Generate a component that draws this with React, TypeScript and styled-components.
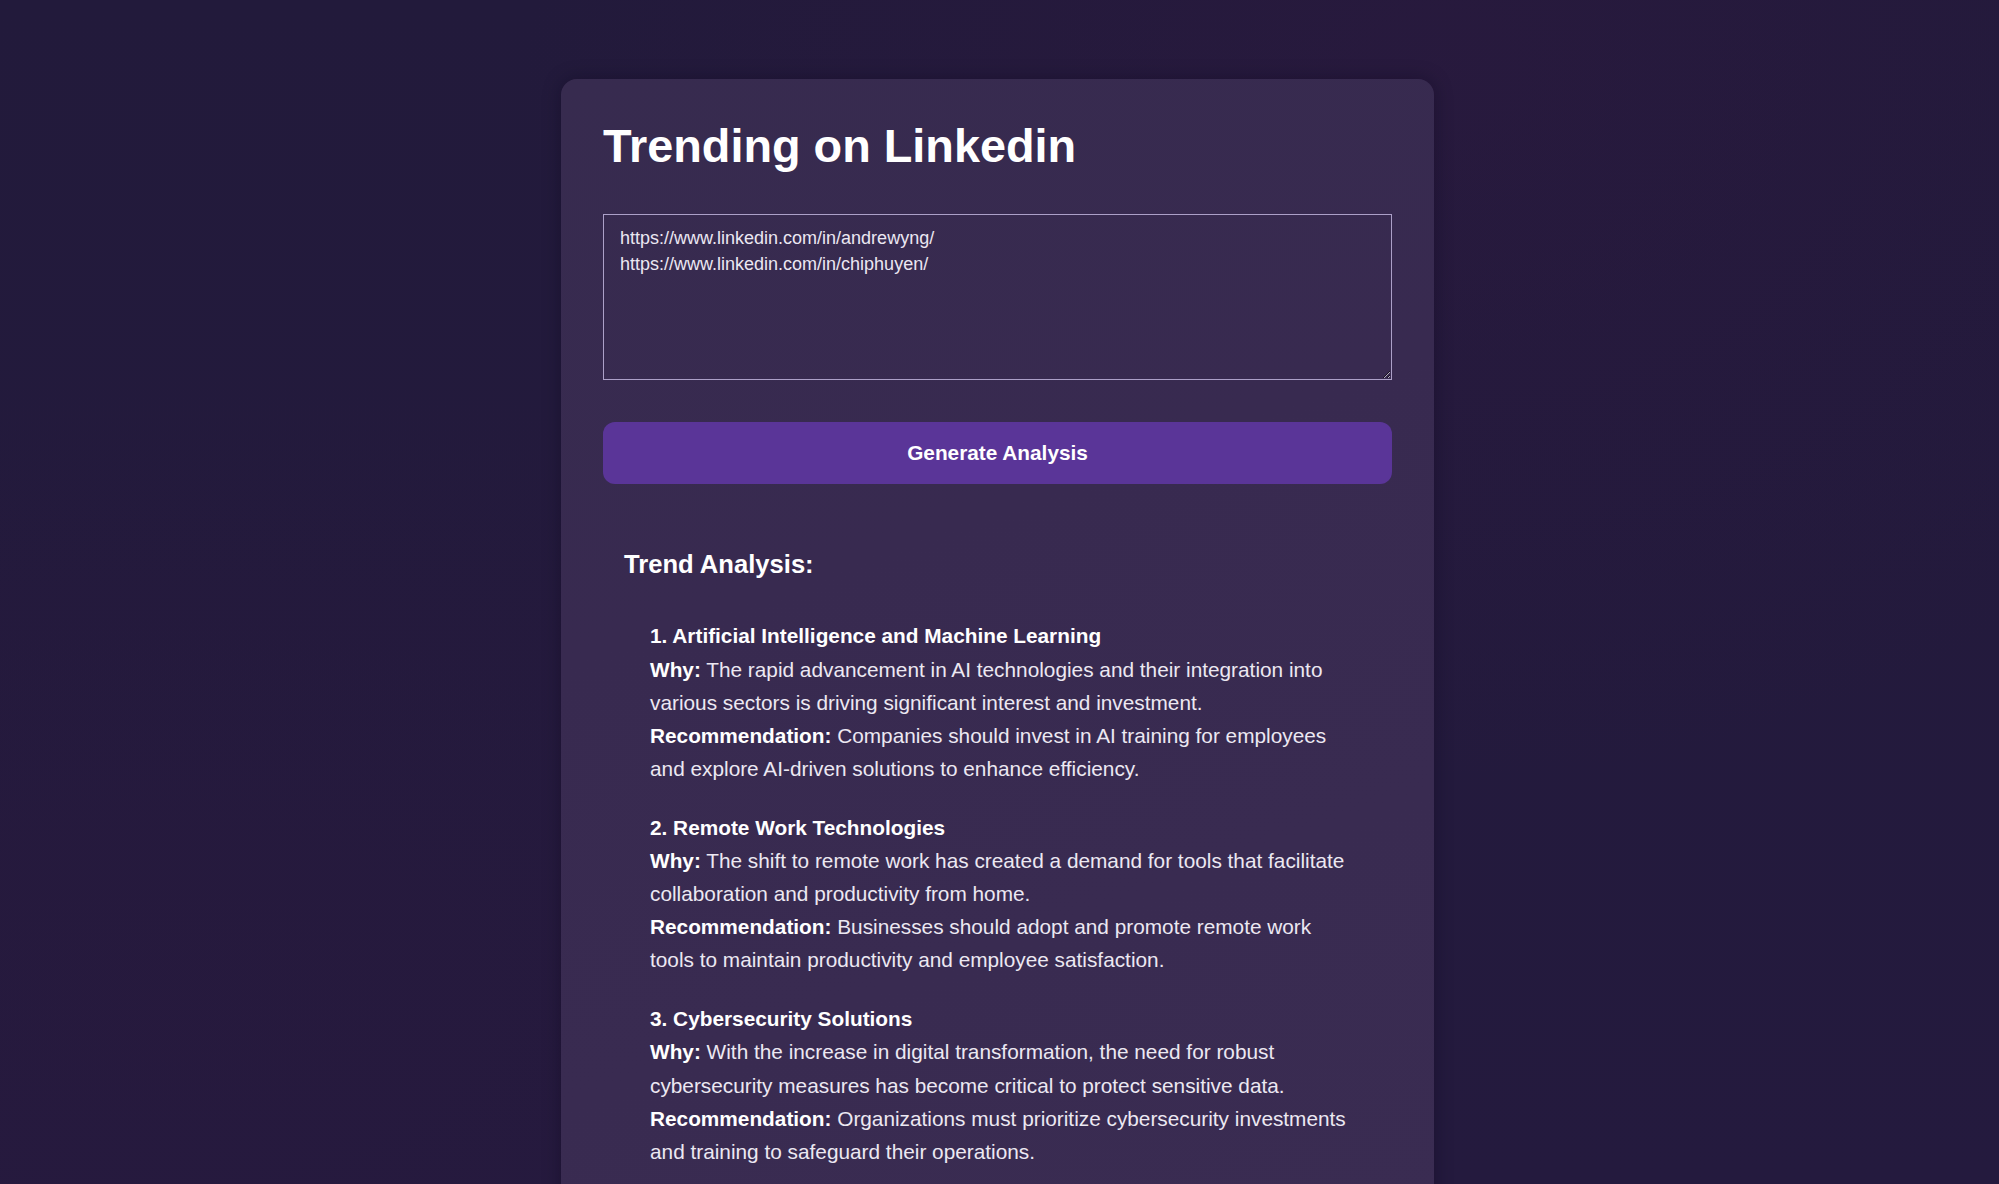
import React from "react";
import styled, { createGlobalStyle } from "styled-components";

const GlobalStyle = createGlobalStyle`
  html, body {
    margin: 0;
    padding: 0;
    background: #231a3d;
    font-family: "Liberation Sans", Arial, sans-serif;
    color: #f4f1f8;
  }
  #root {
    min-height: 100vh;
  }
`;

const Page = styled.div`
  height: 1184px;
  overflow: hidden;
  background:
    radial-gradient(ellipse at 72% 6%, rgba(52, 24, 66, 0.3), transparent 45%),
    radial-gradient(ellipse at 8% 85%, rgba(46, 24, 62, 0.25), transparent 45%),
    linear-gradient(180deg, #221a3b 0%, #241a3e 100%);
  padding: 79px 4px 0 0;
  box-sizing: border-box;
`;

const Card = styled.main`
  width: 873px;
  margin: 0 auto;
  box-sizing: border-box;
  padding: 40px 42px 60px;
  border-radius: 16px 16px 0 0;
  background: linear-gradient(160deg, #372b4f 0%, #382a50 40%, #3a2c52 100%);
  box-shadow: 0 0 18px rgba(10, 5, 25, 0.35);
  min-height: 1105px;
`;

const Title = styled.h1`
  margin: 0;
  font-size: 46.8px;
  line-height: 55.7px;
  font-weight: 700;
  color: #ffffff;
`;

const UrlInput = styled.textarea`
  display: block;
  margin-top: 39px;
  width: 100%;
  height: 166px;
  box-sizing: border-box;
  padding: 10px 16px;
  background: transparent;
  border: 1px solid #aca0c8;
  border-radius: 0;
  color: #ebe7f2;
  font-family: "Liberation Sans", Arial, sans-serif;
  font-size: 18px;
  line-height: 26px;
  outline: none;
  resize: vertical;
  color-scheme: dark;
`;

const GenerateButton = styled.button`
  display: block;
  width: 100%;
  height: 62px;
  margin-top: 42px;
  border: none;
  border-radius: 12px;
  background: #5a3598;
  color: #ffffff;
  font-family: "Liberation Sans", Arial, sans-serif;
  font-size: 20.8px;
  font-weight: 700;
  cursor: pointer;
`;

const Results = styled.section`
  margin-top: 65px;
  padding: 0 21px;
`;

const ResultsTitle = styled.h2`
  margin: 0;
  font-size: 25.6px;
  line-height: 1.2;
  font-weight: 700;
  color: #ffffff;
`;

const TrendList = styled.div`
  margin-top: 40px;
  padding: 0 20px 0 26px;
  display: flex;
  flex-direction: column;
  gap: 26px;
`;

const TrendItem = styled.article`
  font-size: 20.8px;
  line-height: 33.1px;
  color: #ece8f2;
`;

const TrendName = styled.div`
  font-weight: 700;
  color: #ffffff;
`;

const Line = styled.p`
  margin: 0;
`;

const Label = styled.strong`
  font-weight: 700;
  color: #ffffff;
`;

const trends = [
  {
    name: "1. Artificial Intelligence and Machine Learning",
    why: "The rapid advancement in AI technologies and their integration into various sectors is driving significant interest and investment.",
    rec: "Companies should invest in AI training for employees and explore AI-driven solutions to enhance efficiency.",
  },
  {
    name: "2. Remote Work Technologies",
    why: "The shift to remote work has created a demand for tools that facilitate collaboration and productivity from home.",
    rec: "Businesses should adopt and promote remote work tools to maintain productivity and employee satisfaction.",
  },
  {
    name: "3. Cybersecurity Solutions",
    why: "With the increase in digital transformation, the need for robust cybersecurity measures has become critical to protect sensitive data.",
    rec: "Organizations must prioritize cybersecurity investments and training to safeguard their operations.",
  },
];

export default function App() {
  return (
    <>
      <GlobalStyle />
      <Page>
        <Card>
          <Title>Trending on Linkedin</Title>
          <UrlInput
            defaultValue={
              "https://www.linkedin.com/in/andrewyng/\nhttps://www.linkedin.com/in/chiphuyen/"
            }
          />
          <GenerateButton>Generate Analysis</GenerateButton>
          <Results>
            <ResultsTitle>Trend Analysis:</ResultsTitle>
            <TrendList>
              {trends.map((t) => (
                <TrendItem key={t.name}>
                  <TrendName>{t.name}</TrendName>
                  <Line>
                    <Label>Why:</Label> {t.why}
                  </Line>
                  <Line>
                    <Label>Recommendation:</Label> {t.rec}
                  </Line>
                </TrendItem>
              ))}
            </TrendList>
          </Results>
        </Card>
      </Page>
    </>
  );
}
